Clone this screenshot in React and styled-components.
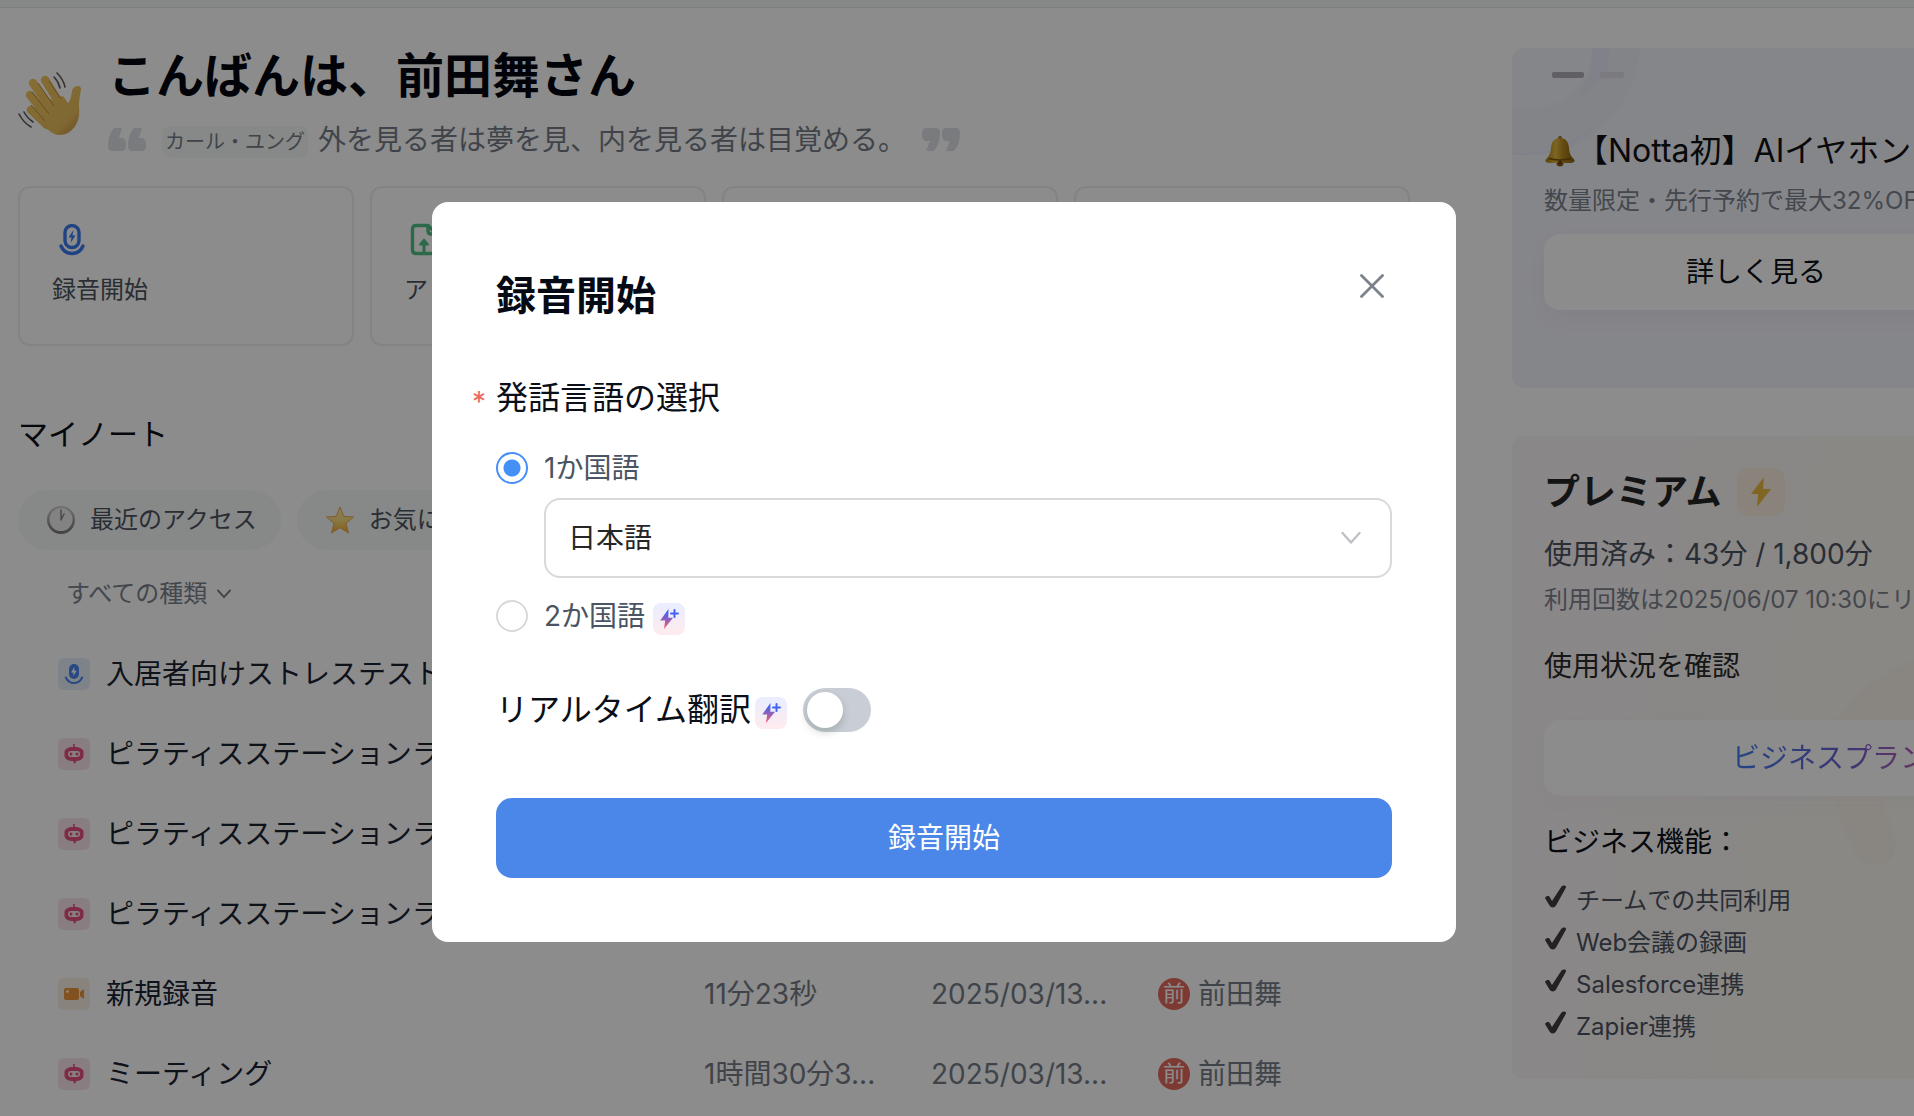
import React, { useState } from 'react'
import styled, { createGlobalStyle, css } from 'styled-components'

const GlobalStyle = createGlobalStyle`
	* {
		box-sizing: border-box;
		margin: 0;
		padding: 0;
	}
	body {
		background: #fff;
		color: #0b0f17;
		font-family: Inter, 'Noto Sans CJK JP', sans-serif;
		font-size: 28px;
		line-height: 40px;
		overflow: hidden;
	}
	button,
	select,
	input {
		font: inherit;
		color: inherit;
		border: none;
		background: none;
	}
	svg {
		display: block;
		flex: none;
	}
`
const Page = styled.div`
	height: 100vh;
	overflow: hidden;
`
const TopBar = styled.div`
	height: 8px;
	background: #f4f8f6;
	border-bottom: 1px solid #e8e8ea;
`
const Layout = styled.div`
	display: grid;
	grid-template-columns: minmax(0, 1fr) 402px;
	column-gap: 102px;
	padding: 40px 0 0 18px;
`
const Greeting = styled.header`
	display: flex;
	align-items: center;
	gap: 24px;
`
const Hello = styled.h1`
	font-size: 48px;
	line-height: 56px;
	font-weight: 700;
	color: #04070f;
`
const Quote = styled.div`
	display: flex;
	align-items: flex-start;
	height: 34px;
	margin-top: 22px;
	color: #757d87;
	white-space: nowrap;
`
const Author = styled.span`
	margin: 0 10px 0 16px;
	padding: 0 3px;
	border-radius: 8px;
	background: #f6faf9;
	font-size: 20px;
	line-height: 32px;
`
const QuoteText = styled.span`
	margin-right: 16px;
	line-height: 28px;
`
const Actions = styled.div`
	display: grid;
	grid-template-columns: repeat(4, 1fr);
	gap: 16px;
	margin-top: 26px;
`
const Action = styled.button`
	display: flex;
	flex-direction: column;
	align-items: flex-start;
	gap: 14px;
	height: 160px;
	padding: 34px 32px;
	border: 2px solid #efeff0;
	border-radius: 12px;
	color: #4d5460;
	font-size: 24px;
	line-height: 36px;
`
const SectionTitle = styled.h2`
	margin-top: 66px;
	font-size: 30px;
	line-height: 44px;
	font-weight: 400;
`
const Pills = styled.div`
	display: flex;
	gap: 16px;
	margin-top: 34px;
`
const Pill = styled.button`
	display: flex;
	align-items: center;
	gap: 14px;
	height: 60px;
	padding: 0 24px 0 28px;
	border-radius: 30px;
	background: #f5f9f8;
	color: #4d5460;
	font-size: 24px;
`
const Filter = styled.button`
	display: flex;
	align-items: center;
	gap: 10px;
	margin: 28px 0 24px 48px;
	color: #7b828c;
	font-size: 24px;
	line-height: 32px;
`
const Notes = styled.table`
	width: 100%;
	table-layout: fixed;
	border-collapse: collapse;
	color: #767d87;
	td {
		height: 80px;
		overflow: hidden;
		white-space: nowrap;
	}
`
const Col = styled.col`
	width: ${({ $w }) => $w};
`
const NoteName = styled.div`
	display: flex;
	align-items: center;
	gap: 16px;
	padding-left: 40px;
	color: #1b2432;
`
const tileColors = {
	mic: '#e6eefb',
	bot: '#f7e3e9',
	video: '#f8efe3'
}
const Tile = styled.span`
	display: grid;
	place-items: center;
	width: 32px;
	height: 32px;
	border-radius: 6px;
	background: ${({ $kind }) => tileColors[$kind]};
`
const Owner = styled.div`
	display: flex;
	align-items: center;
	gap: 8px;
`
const Avatar = styled.span`
	width: 32px;
	height: 32px;
	border-radius: 50%;
	background: #e3695d;
	color: #fff;
	font-size: 22px;
	line-height: 30px;
	text-align: center;
`
/* the panels are wider than their column and run out of the window */
const Side = styled.aside`
	display: flex;
	flex-direction: column;
	gap: 48px;
	overflow: hidden;
	white-space: nowrap;
`
const panel = css`
	position: relative;
	width: 488px;
	padding: 0 32px;
	border-radius: 12px;
	overflow: hidden;
`
const Promo = styled.section`
	${panel}
	height: 340px;
	padding-top: 24px;
	background: #f3f4fc;
`
const Rings = styled.svg`
	position: absolute;
	left: 0;
	top: 0;
`
const Dots = styled.div`
	position: relative;
	display: flex;
	gap: 16px;
	padding-left: 8px;
`
const Dot = styled.span`
	width: ${({ $on }) => ($on ? '32px' : '24px')};
	height: 6px;
	border-radius: 2px;
	background: ${({ $on }) => ($on ? '#adadb6' : '#dedee7')};
`
const PromoTitle = styled.h3`
	position: relative;
	display: flex;
	align-items: center;
	margin-top: 49px;
	font-size: 32px;
	line-height: 48px;
	font-weight: 400;
	color: #111;
`
const Small = styled.p`
	color: #7d838d;
	font-size: 24px;
	line-height: 36px;
`
const PromoNote = styled(Small)`
	margin-top: 8px;
`
const White = styled.button`
	display: block;
	width: 100%;
	height: 76px;
	border-radius: 16px;
	background: #fff;
	box-shadow: ${({ $soft }) =>
		$soft
			? '0 8px 24px rgba(90, 70, 120, 0.02)'
			: '0 8px 24px rgba(90, 70, 120, 0.06)'};
`
const PromoButton = styled(White)`
	margin-top: 15px;
`
const Plan = styled.section`
	${panel}
	height: 643px;
	padding-top: 32px;
	background: linear-gradient(100deg, #fbf6fa 0%, #faf7f2 60%, #faf8ee 100%);
`
const Flare = styled.svg`
	position: absolute;
	right: 0;
	bottom: 0;
`
const PlanBody = styled.div`
	position: relative;
`
const PlanTitle = styled.h3`
	display: flex;
	align-items: center;
	gap: 16px;
	font-size: 36px;
	line-height: 48px;
	color: #262626;
`
const Bolt = styled.span`
	display: grid;
	place-items: center;
	width: 48px;
	height: 48px;
	border-radius: 12px;
	background: #fbeee0;
`
const Usage = styled.p`
	margin-top: 18px;
	color: #4b5260;
`
const PlanNote = styled(Small)`
	margin-top: 8px;
`
const UsageLink = styled.a`
	display: block;
	margin: 28px 0 34px;
	color: #2b2b2b;
	text-decoration: none;
`
const Upgrade = styled(White)`
	padding-left: 188px;
	text-align: left;
	span {
		background: linear-gradient(90deg, #3f7ff0 0%, #6a62d6 55%, #c25fb0 100%);
		background-clip: text;
		color: transparent;
	}
`
const Features = styled.h4`
	margin: 26px 0 18px;
	font-weight: 400;
`
const Feature = styled.li`
	display: flex;
	align-items: center;
	gap: 8px;
	color: #4b5260;
	font-size: 24px;
	line-height: 42px;
	svg {
		margin-bottom: 8px;
	}
`
const FeatureList = styled.ul`
	list-style: none;
`
const Overlay = styled.div`
	position: fixed;
	inset: 0;
	display: grid;
	place-items: center;
	padding: 28px 26px 0 0;
	background: rgba(0, 0, 0, 0.45);
`
const Modal = styled.form`
	width: 1024px;
	max-width: 90%;
	padding: 64px;
	border-radius: 16px;
	background: #fff;
`
const ModalHead = styled.div`
	display: flex;
	justify-content: space-between;
	align-items: flex-start;
	padding-right: 8px;
`
const ModalTitle = styled.h2`
	font-size: 40px;
	line-height: 60px;
	font-weight: 700;
	color: #060a14;
`
const Close = styled.button`
	padding: 8px 0;
`
const Group = styled.fieldset`
	margin-top: 48px;
	border: none;
`
const Legend = styled.legend`
	font-size: 32px;
	line-height: 48px;
	&::before {
		content: '*';
		float: left;
		margin-left: -24px;
		font-size: 28px;
		line-height: 56px;
		color: #ee6a5f;
	}
`
const Choice = styled.label`
	display: flex;
	align-items: center;
	gap: 8px;
	margin-top: 18px;
	color: #4b5462;
`
const Radio = styled.input`
	appearance: none;
	width: 32px;
	height: 32px;
	margin-right: 8px;
	border: 2px solid #d9d9d9;
	border-radius: 50%;
	&:checked {
		border-color: #4590f7;
		background: radial-gradient(circle, #4590f7 0 8px, transparent 9px);
	}
`
const SelectBox = styled.div`
	display: grid;
	align-items: center;
	margin: 10px 0 0 48px;
	> * {
		grid-area: 1 / 1;
	}
	svg {
		justify-self: end;
		margin-right: 31px;
		pointer-events: none;
	}
`
const Select = styled.select`
	appearance: none;
	width: 100%;
	height: 80px;
	padding: 0 22px;
	border: 2px solid #d9d9d9;
	border-radius: 16px;
	color: #262626;
`
const Realtime = styled.div`
	display: flex;
	align-items: center;
	gap: 16px;
	margin-top: 50px;
	font-size: 32px;
	line-height: 48px;
`
const RealtimeLabel = styled.label`
	display: flex;
	align-items: center;
	gap: 4px;
`
const PlusTile = styled.span`
	display: grid;
	place-items: center;
	width: 32px;
	height: 32px;
	margin-top: 6px;
	border-radius: 8px;
	background: linear-gradient(#e9eeff, #ffebee);
`
const Toggle = styled.input`
	appearance: none;
	width: 68px;
	height: 44px;
	padding: 4px;
	border-radius: 22px;
	background: #c9ced6;
	&::before {
		content: '';
		display: block;
		width: 36px;
		height: 36px;
		border-radius: 50%;
		background: #fff;
		box-shadow: 0 4px 8px rgba(0, 35, 11, 0.2);
	}
	&:checked {
		background: #4b87e8;
	}
	&:checked::before {
		margin-left: 24px;
	}
`
const Start = styled.button`
	display: block;
	width: 100%;
	height: 80px;
	margin-top: 64px;
	border-radius: 16px;
	background: #4b87e8;
	color: #fff;
`

const WaveIcon = () => (
	<svg width='66' height='66' viewBox='0 0 66 66'>
		<defs>
			<linearGradient id='hand' x1='0' y1='0' x2='1' y2='1'>
				<stop offset='0' stopColor='#f3c860' />
				<stop offset='0.7' stopColor='#e9bd5c' />
				<stop offset='1' stopColor='#c08a3c' />
			</linearGradient>
		</defs>
		<g
			stroke='url(#hand)'
			strokeWidth='8.5'
			strokeLinecap='round'
			fill='none'
		>
			<path d='M27 9L42 33M15 12L35 40M12 24L31 47M13 39L29 54' />
		</g>
		<path
			d='M27 30L45 25L50 32C52 31 53 26 54 20C55 14 64 13 63 19C62 24 61 29 61 37C63 52 53 64 42 64C33 64 29 57 23 51L15 42Z'
			fill='url(#hand)'
		/>
		<path
			d='M20 12L36 35M14 21L31 43M13 34L27 50M31 10L43 28'
			stroke='#bd8a40'
			strokeWidth='1'
			fill='none'
		/>
		<g stroke='#5d5d5d' strokeWidth='1.6' strokeLinecap='round' fill='none'>
			<path d='M39 2C43 6 46 11 47 16M36 6C39 9 41 13 42 17M1 43C4 49 8 53 13 56M6 41C8 45 11 48 15 51' />
		</g>
	</svg>
)
const QuoteIcon = ({ close }) => (
	<svg width='38' height='26' viewBox='0 -2 38 26' fill='#dde0e5'>
		{close ? (
			<path d='M4 0H14Q18 0 18 5Q18 16 12 23H4L8 13H4Q0 13 0 6Q0 0 4 0ZM24 0H34Q38 0 38 5Q38 16 32 23H24L28 13H24Q20 13 20 6Q20 0 24 0Z' />
		) : (
			<path d='M6 0H14L11 10H14Q18 10 18 17Q18 23 14 23H4Q0 23 0 18Q0 7 6 0ZM26 0H34L31 10H34Q38 10 38 17Q38 23 34 23H24Q20 23 20 18Q20 7 26 0Z' />
		)}
	</svg>
)
const MicIcon = () => (
	<svg width='40' height='36' viewBox='0 0 40 36' fill='none'>
		<rect
			x='13'
			y='3.5'
			width='14'
			height='22'
			rx='7'
			stroke='#3b7bf0'
			strokeWidth='3.4'
		/>
		<path
			d='M9 24C11 29 15 31.5 20 31.5S29 29 31 24'
			stroke='#3b7bf0'
			strokeWidth='3.4'
			strokeLinecap='round'
		/>
		<path d='M21.5 8L16.5 15.5H19.5L18.5 21L23.5 13.5H20.5Z' fill='#3b7bf0' />
	</svg>
)
const UploadIcon = () => (
	<svg width='40' height='36' viewBox='0 0 40 36' fill='none'>
		<path
			d='M24 3.5H12Q8.5 3.5 8.5 7V28Q8.5 31.5 12 31.5H29Q32.5 31.5 32.5 28V12L24 3.5V9Q24 12 27 12H32.5'
			stroke='#4fbf83'
			strokeWidth='3.4'
			strokeLinejoin='round'
		/>
		<path d='M20 31V22' stroke='#4fbf83' strokeWidth='3' />
		<path
			d='M20 17.5L16 22.5H24Z'
			stroke='#4fbf83'
			strokeWidth='2'
			strokeLinejoin='round'
			fill='#4fbf83'
		/>
	</svg>
)
const ClockIcon = () => (
	<svg width='30' height='30' viewBox='0 0 30 30'>
		<defs>
			<linearGradient id='clock' x1='0' y1='0' x2='0' y2='1'>
				<stop offset='0' stopColor='#cfcfcf' />
				<stop offset='1' stopColor='#777' />
			</linearGradient>
		</defs>
		<circle cx='15' cy='15' r='14' fill='url(#clock)' />
		<circle cx='15' cy='14.5' r='11.5' fill='#efefef' />
		<path
			d='M15 15V5M15 15L18 9'
			stroke='#888'
			strokeWidth='1.5'
			strokeLinecap='round'
		/>
	</svg>
)
const StarIcon = () => (
	<svg width='30' height='30' viewBox='0 0 30 30'>
		<defs>
			<linearGradient id='star' x1='0' y1='0' x2='0' y2='1'>
				<stop offset='0' stopColor='#f7e3a0' />
				<stop offset='0.5' stopColor='#f8dc80' />
				<stop offset='1' stopColor='#f7a928' />
			</linearGradient>
		</defs>
		<path
			d='M15 2L18.8 11.3L28.5 12L21 18.3L23.5 28L15 22.7L6.5 28L9 18.3L1.5 12L11.2 11.3Z'
			fill='url(#star)'
			stroke='#e8a850'
			strokeWidth='1'
			strokeLinejoin='round'
		/>
	</svg>
)
const BellIcon = () => (
	<svg width='32' height='32' viewBox='0 0 32 32'>
		<defs>
			<linearGradient id='bell' x1='0' y1='0' x2='1' y2='0'>
				<stop offset='0' stopColor='#a97b16' />
				<stop offset='0.35' stopColor='#e3b93f' />
				<stop offset='0.6' stopColor='#b98a1e' />
				<stop offset='1' stopColor='#8a6212' />
			</linearGradient>
		</defs>
		<circle cx='16' cy='3' r='2' fill='#94701f' />
		<circle cx='16' cy='28' r='3.5' fill='#8a5d17' />
		<path
			d='M16 3C22 3 24.5 7 25 13C25.5 19 27 21 30.5 25C31 27 29 28 26 28H6C3 28 1 27 1.5 25C5 21 6.5 19 7 13C7.5 7 10 3 16 3Z'
			fill='url(#bell)'
		/>
		<path
			d='M4.5 23.5Q16 26.5 27.5 23.5'
			stroke='#7a5510'
			strokeWidth='1.5'
			fill='none'
		/>
		<circle cx='16' cy='27.5' r='2' fill='#6a430e' />
	</svg>
)
const CheckIcon = () => (
	<svg width='24' height='24' viewBox='0 0 24 24'>
		<path
			d='M1 13C2.5 10.5 5 10.5 6 12.5L8 16L17.5 1.5C19 0 22.5 0 22 2.5L12 20.5C10.5 23 7 23 5.5 20.5Z'
			fill='#3f3f3f'
		/>
	</svg>
)
const Chevron = ({ size, color, stroke }) => (
	<svg width={size} height={size} viewBox='0 0 20 20' fill='none'>
		<path
			d='M1.5 5L10 14.5L18.5 5'
			stroke={color}
			strokeWidth={stroke}
			strokeLinecap='round'
			strokeLinejoin='round'
		/>
	</svg>
)
const tileIcons = {
	mic: (
		<svg width='20' height='24' viewBox='0 0 20 24'>
			<rect x='5' y='2' width='10' height='15' rx='5' fill='#4a86ee' />
			<path
				d='M1.8 15.5C4 20 7 21 10 21S16 20 18.2 15.5'
				stroke='#4a86ee'
				strokeWidth='2'
				strokeLinecap='round'
				fill='none'
			/>
			<path d='M10.5 5L7 10.5H9.5L9 14L12.8 8.8H10.3Z' fill='#fff' />
		</svg>
	),
	bot: (
		<svg width='20' height='22' viewBox='0 0 20 22' fill='#e64f7f'>
			<path d='M9.2 1H10.8V4C15.5 4 19 6 19.5 8.5V13.5C18 17 15 18 12.5 18L10.5 21L9 18C5 18 2 17 .5 13.5V8.5C1 6 4.5 4 9.2 4Z' />
			<rect x='4' y='8' width='12' height='6' rx='3' fill='#fde6ed' />
			<circle cx='7' cy='11' r='1.5' />
			<circle cx='13' cy='11' r='1.5' />
		</svg>
	),
	video: (
		<svg width='20' height='14' viewBox='0 0 20 14' fill='#ec9539'>
			<rect x='0' y='1' width='15' height='12' rx='2' />
			<path d='M16 5L19 2.5Q20 2 20 3.5V10.5Q20 12 19 11.5L16 9Z' />
			<circle cx='3.5' cy='4.5' r='1.3' fill='#fff' />
		</svg>
	)
}
const PlusBadge = () => (
	<PlusTile>
		<svg width='20' height='22' viewBox='0 0 20 22'>
			<defs>
				<linearGradient id='plus' x1='0' y1='0' x2='0' y2='1'>
					<stop offset='0.2' stopColor='#4263f5' />
					<stop offset='1' stopColor='#ff5a68' />
				</linearGradient>
			</defs>
			<path d='M9.5 1L1.2 12.5H6.2L5 21L14 9.8H9.3Z' fill='url(#plus)' />
			<path
				d='M15.5 2V9M12 5.5H19'
				stroke='#4263f5'
				strokeWidth='2'
				strokeLinecap='round'
			/>
		</svg>
	</PlusTile>
)

const notes = [
	{ kind: 'mic', name: '入居者向けストレステスト' },
	{ kind: 'bot', name: 'ピラティスステーションラ' },
	{ kind: 'bot', name: 'ピラティスステーションラ' },
	{ kind: 'bot', name: 'ピラティスステーションラ' },
	{
		kind: 'video',
		name: '新規録音',
		length: '11分23秒',
		date: '2025/03/13...',
		owner: '前田舞'
	},
	{
		kind: 'bot',
		name: 'ミーティング',
		length: '1時間30分3...',
		date: '2025/03/13...',
		owner: '前田舞'
	}
]
const features = [
	'チームでの共同利用',
	'Web会議の録画',
	'Salesforce連携',
	'Zapier連携'
]

function Home() {
	return (
		<main>
			<Greeting>
				<WaveIcon />
				<div>
					<Hello>こんばんは、前田舞さん</Hello>
					<Quote>
						<QuoteIcon />
						<Author>カール・ユング</Author>
						<QuoteText>外を見る者は夢を見、内を見る者は目覚める。</QuoteText>
						<QuoteIcon close />
					</Quote>
				</div>
			</Greeting>
			<Actions>
				<Action>
					<MicIcon />
					録音開始
				</Action>
				<Action>
					<UploadIcon />ア
				</Action>
				<Action />
				<Action />
			</Actions>
			<SectionTitle>マイノート</SectionTitle>
			<Pills>
				<Pill>
					<ClockIcon />
					最近のアクセス
				</Pill>
				<Pill>
					<StarIcon />
					お気に
				</Pill>
			</Pills>
			<Filter>
				すべての種類
				<Chevron size={14} color='#7b828c' stroke={2.8} />
			</Filter>
			<Notes>
				<colgroup>
					<Col />
					<Col $w='227px' />
					<Col $w='227px' />
					<Col $w='252px' />
				</colgroup>
				<tbody>
					{notes.map((note, i) => (
						<tr key={i}>
							<td>
								<NoteName>
									<Tile $kind={note.kind}>{tileIcons[note.kind]}</Tile>
									{note.name}
								</NoteName>
							</td>
							<td>{note.length}</td>
							<td>{note.date}</td>
							<td>
								{note.owner && (
									<Owner>
										<Avatar>{note.owner[0]}</Avatar>
										{note.owner}
									</Owner>
								)}
							</td>
						</tr>
					))}
				</tbody>
			</Notes>
		</main>
	)
}

function SidePanels() {
	return (
		<Side>
			<Promo>
				<Rings width='140' height='120' fill='none'>
					<circle cx='17' cy='-3' r='87' stroke='#eff0f8' strokeWidth='47' />
					<path d='M81 0C80 20 74 40 62 54L94 28L98 0Z' fill='#ebecfb' />
					<path
						d='M0 105Q50 108 88 73Q66 98 36 104Q16 108 0 106Z'
						fill='#e8eafb'
					/>
				</Rings>
				<Dots>
					<Dot $on />
					<Dot />
				</Dots>
				<PromoTitle>
					<BellIcon />
					【Notta初】AIイヤホン
				</PromoTitle>
				<PromoNote>数量限定・先行予約で最大32%OF</PromoNote>
				<PromoButton>詳しく見る</PromoButton>
			</Promo>
			<Plan>
				<Flare width='200' height='440' fill='#faf4ed'>
					<path d='M38 81Q62 40 114 21Q150 10 200 12V81Z' />
					<path d='M20 120L32 157L50 205Q60 226 78 226Q98 222 96 200L74 140Z' />
				</Flare>
				<PlanBody>
					<PlanTitle>
						プレミアム
						<Bolt>
							<svg width='20' height='32' viewBox='0 0 20 32' fill='#ecb83f'>
								<path d='M13 1L0 18H7L6 31L20 13H12Z' />
							</svg>
						</Bolt>
					</PlanTitle>
					<Usage>使用済み：43分 / 1,800分</Usage>
					<PlanNote>利用回数は2025/06/07 10:30にリ</PlanNote>
					<UsageLink href='#usage'>使用状況を確認</UsageLink>
					<Upgrade $soft>
						<span>ビジネスプラン</span>
					</Upgrade>
					<Features>ビジネス機能：</Features>
					<FeatureList>
						{features.map(text => (
							<Feature key={text}>
								<CheckIcon />
								{text}
							</Feature>
						))}
					</FeatureList>
				</PlanBody>
			</Plan>
		</Side>
	)
}

function RecordModal() {
	const [count, setCount] = useState(1)
	const [realtime, setRealtime] = useState(false)
	return (
		<Overlay>
			<Modal
				role='dialog'
				aria-labelledby='record-title'
				onSubmit={e => e.preventDefault()}
			>
				<ModalHead>
					<ModalTitle id='record-title'>録音開始</ModalTitle>
					<Close type='button' aria-label='閉じる'>
						<svg width='24' height='24' viewBox='0 0 24 24'>
							<path
								d='M1.5 1.5L22.5 22.5M22.5 1.5L1.5 22.5'
								stroke='#7b828c'
								strokeWidth='2.8'
								strokeLinecap='round'
							/>
						</svg>
					</Close>
				</ModalHead>
				<Group>
					<Legend>発話言語の選択</Legend>
					<Choice>
						<Radio
							type='radio'
							name='count'
							checked={count === 1}
							onChange={() => setCount(1)}
						/>
						1か国語
					</Choice>
					<SelectBox>
						<Select aria-label='発話言語'>
							<option>日本語</option>
						</Select>
						<Chevron size={20} color='#bfc1c6' stroke={2.4} />
					</SelectBox>
					<Choice>
						<Radio
							type='radio'
							name='count'
							checked={count === 2}
							onChange={() => setCount(2)}
						/>
						2か国語
						<PlusBadge />
					</Choice>
				</Group>
				<Realtime>
					<RealtimeLabel htmlFor='realtime'>
						リアルタイム翻訳
						<PlusBadge />
					</RealtimeLabel>
					<Toggle
						id='realtime'
						type='checkbox'
						role='switch'
						checked={realtime}
						onChange={e => setRealtime(e.target.checked)}
					/>
				</Realtime>
				<Start>録音開始</Start>
			</Modal>
		</Overlay>
	)
}

export default function App() {
	return (
		<>
			<GlobalStyle />
			<Page>
				<TopBar />
				<Layout>
					<Home />
					<SidePanels />
				</Layout>
			</Page>
			<RecordModal />
		</>
	)
}
